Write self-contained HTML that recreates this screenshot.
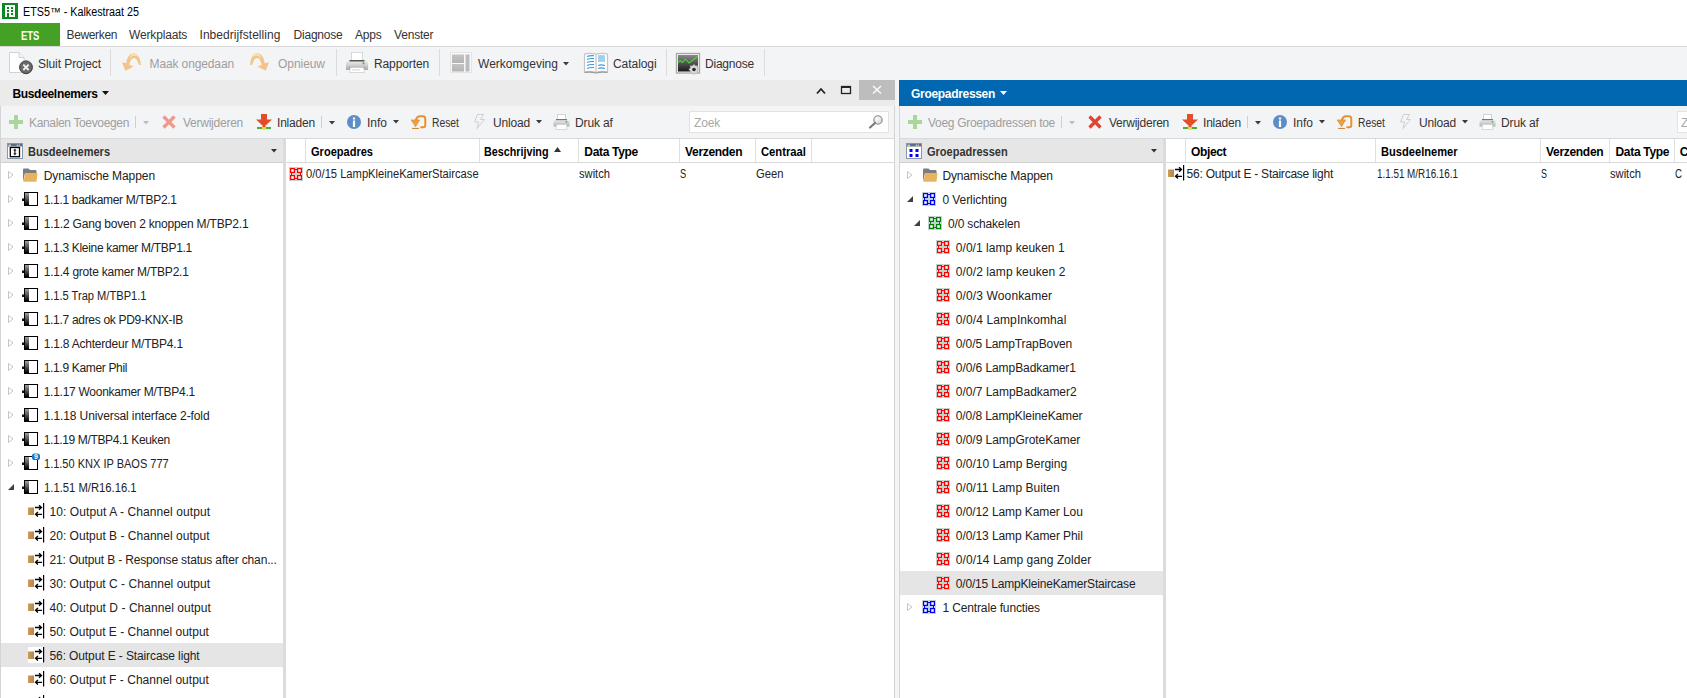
<!DOCTYPE html>
<html><head><meta charset="utf-8"><title>ETS5</title>
<style>
html,body{margin:0;padding:0;width:1687px;height:698px;overflow:hidden;background:#fff}
.t{position:absolute;font-family:"Liberation Sans", sans-serif;font-size:12px;line-height:14px;white-space:pre}
svg{overflow:visible}
</style></head><body>
<div style="position:absolute;left:0px;top:0px;width:1687px;height:698px;background:#ffffff;"></div>
<svg style="position:absolute;left:2px;top:3px" width="16" height="16" viewBox="0 0 16 16"><rect x="0" y="0" width="16" height="16" fill="#0a8a1e"/><rect x="3" y="2" width="10" height="12" fill="#fff"/><rect x="5" y="4" width="2" height="2" fill="#0a8a1e"/><rect x="9" y="4" width="2" height="2" fill="#0a8a1e"/><rect x="5" y="7" width="2" height="2" fill="#0a8a1e"/><rect x="9" y="7" width="2" height="2" fill="#0a8a1e"/><rect x="5" y="10" width="2" height="4" fill="#0a8a1e"/><rect x="9" y="10" width="2" height="2" fill="#0a8a1e"/></svg>
<div style="position:absolute;left:0px;top:23px;width:60px;height:23px;background:#45a026;"></div>
<div style="position:absolute;left:0px;top:46px;width:1687px;height:1px;background:#dadada;"></div>
<div style="position:absolute;left:0px;top:47px;width:1687px;height:33px;background:#f3f4f6;"></div>
<div style="position:absolute;left:110px;top:49px;width:1px;height:27px;background:#dcdcdc;"></div>
<div style="position:absolute;left:336px;top:49px;width:1px;height:27px;background:#dcdcdc;"></div>
<div style="position:absolute;left:439px;top:49px;width:1px;height:27px;background:#dcdcdc;"></div>
<div style="position:absolute;left:666px;top:49px;width:1px;height:27px;background:#dcdcdc;"></div>
<div style="position:absolute;left:764px;top:49px;width:1px;height:27px;background:#dcdcdc;"></div>
<svg style="position:absolute;left:8px;top:51px" width="26" height="24" viewBox="0 0 26 24"><path d="M1.5 1.5 H11 L16 6.5 V21.5 H1.5 Z" fill="#fff" stroke="#d2d2d2" stroke-width="1"/><path d="M11 1.5 V6.5 H16" fill="#f4f4f4" stroke="#d2d2d2" stroke-width="1"/><circle cx="18" cy="16.3" r="6.4" fill="#6a6a6a" stroke="#3a3a3a" stroke-width="1"/><path d="M15.3 13.6 L20.7 19 M20.7 13.6 L15.3 19" stroke="#f0f0f0" stroke-width="2"/></svg>
<svg style="position:absolute;left:121px;top:52px" width="22" height="20" viewBox="0 0 22 20"><path d="M19.9 13.3 C19.5 6 16.5 1.2 12.8 1.2 C8.8 1.2 6 5 5.3 11.3 L1 10.3 L4.3 18.7 L12.7 14.4 L8.4 12.9 C9 8.8 10.8 6 13 6 C15 6 16.8 8.3 17.6 12.5 Z" fill="#f2c48c"/><path d="M12.8 1.4 C15.5 1.4 17.3 3.5 18 5.5 C16.5 4.3 14.8 3.6 13 3.8 C11 4 9.5 5.3 8.3 7.3 C9 4 10.8 1.4 12.8 1.4Z" fill="#f6e6a8"/></svg>
<svg style="position:absolute;left:249px;top:52px" width="22" height="20" viewBox="0 0 22 20"><g transform="translate(21,0) scale(-1,1)"><path d="M19.9 13.3 C19.5 6 16.5 1.2 12.8 1.2 C8.8 1.2 6 5 5.3 11.3 L1 10.3 L4.3 18.7 L12.7 14.4 L8.4 12.9 C9 8.8 10.8 6 13 6 C15 6 16.8 8.3 17.6 12.5 Z" fill="#f2c48c"/><path d="M12.8 1.4 C15.5 1.4 17.3 3.5 18 5.5 C16.5 4.3 14.8 3.6 13 3.8 C11 4 9.5 5.3 8.3 7.3 C9 4 10.8 1.4 12.8 1.4Z" fill="#f6e6a8"/></g></svg>
<svg style="position:absolute;left:345px;top:51px" width="24" height="22" viewBox="0 0 24 22"><defs><linearGradient id="pg" x1="0" y1="0" x2="0" y2="1"><stop offset="0" stop-color="#f0f0f0"/><stop offset="0.5" stop-color="#cfcfcf"/><stop offset="1" stop-color="#a8a8a8"/></linearGradient></defs><rect x="6.5" y="1.5" width="11" height="8" fill="#fff" stroke="#d8d8d8" stroke-width="1"/><path d="M3 9.5 H21 Q23 10 23 12 V19 H1 V12 Q1 10 3 9.5 Z" fill="url(#pg)"/><rect x="4.5" y="9" width="15" height="1.5" fill="#555"/><circle cx="18.5" cy="12.3" r="1.1" fill="#3fbf3f"/><rect x="4.5" y="16" width="15" height="1" fill="#777"/><path d="M5.5 16.5 H18.5 L19.5 21.5 H4.5 Z" fill="#fff" stroke="#d0d0d0" stroke-width="0.8"/><rect x="7" y="18.5" width="8" height="0.8" fill="#c8c8c8"/></svg>
<svg style="position:absolute;left:449px;top:51px" width="24" height="23" viewBox="0 0 24 23"><defs><linearGradient id="wg" x1="0" y1="0" x2="0" y2="1"><stop offset="0" stop-color="#c4c4c4"/><stop offset="1" stop-color="#b4b4b4"/></linearGradient></defs><rect x="1.5" y="1.5" width="21" height="20" fill="#f8f8f8" stroke="#e4e4e4" stroke-width="1"/><rect x="3" y="3.5" width="12" height="8.5" fill="url(#wg)"/><rect x="3" y="13" width="12" height="7.5" fill="url(#wg)"/><rect x="16.5" y="3.5" width="4" height="17" fill="#bcbcbc"/></svg>
<svg style="position:absolute;left:563px;top:62px" width="6" height="3.5" viewBox="0 0 6 3.5"><path d="M0 0 H6 L3.0 3.5 Z" fill="#3c3c3c"/></svg>
<svg style="position:absolute;left:583px;top:52px" width="26" height="23" viewBox="0 0 26 23"><path d="M1.5 2 Q7 0.8 13 2.2 Q19 0.8 24.5 2 V19.8 Q19 18.8 13 20.3 Q7 18.8 1.5 19.8 Z" fill="#fff" stroke="#c4c4c4" stroke-width="1.2"/><path d="M13 2.2 V20" stroke="#d0d0d0" stroke-width="1.6"/><path d="M15 3.3 Q18.5 2.6 22 3.3 V10 Q18.5 9.4 15 10 Z" fill="#9fd0ee"/><path d="M4 4.6000000000000005 Q6 3.5 11 3.7" stroke="#3c9ad8" stroke-width="1.1" fill="none"/><path d="M4 7.5 Q6 6.3999999999999995 11 6.6" stroke="#3c9ad8" stroke-width="1.1" fill="none"/><path d="M4 10.5 Q6 9.4 11 9.6" stroke="#3c9ad8" stroke-width="1.1" fill="none"/><path d="M4 13.5 Q6 12.4 11 12.6" stroke="#3c9ad8" stroke-width="1.1" fill="none"/><path d="M4 16.5 Q6 15.4 11 15.6" stroke="#3c9ad8" stroke-width="1.1" fill="none"/><path d="M15.2 13.5 Q17.5 12.299999999999999 22 13.5" stroke="#3c9ad8" stroke-width="1.1" fill="none"/><path d="M15.2 16.5 Q17.5 15.299999999999999 22 16.5" stroke="#3c9ad8" stroke-width="1.1" fill="none"/><path d="M1.5 20.5 Q7 19.5 13 21 Q19 19.5 24.5 20.5" stroke="#9a9a9a" stroke-width="1.1" fill="none"/></svg>
<svg style="position:absolute;left:675px;top:52px" width="26" height="24" viewBox="0 0 26 24"><defs><linearGradient id="dg" x1="0" y1="0" x2="0" y2="1"><stop offset="0" stop-color="#8a8a8a"/><stop offset="1" stop-color="#1a1a1a"/></linearGradient></defs><rect x="1.5" y="1.5" width="23" height="19.5" fill="#f4f4f4" stroke="#a8a8a8" stroke-width="1.3"/><rect x="3" y="3" width="20" height="16.5" fill="url(#dg)"/><path d="M3 11 L5 8.5 L7.5 10.5 L10.5 7 L14 11 L22.5 4.5" stroke="#4fd23a" stroke-width="1.1" fill="none"/><polygon points="24.20,17.50 22.51,18.95 22.68,21.18 20.45,21.01 19.00,22.70 17.55,21.01 15.32,21.18 15.49,18.95 13.80,17.50 15.49,16.05 15.32,13.82 17.55,13.99 19.00,12.30 20.45,13.99 22.68,13.82 22.51,16.05" fill="#d8d8d8" stroke="#b0b0b0" stroke-width="0.6"/><circle cx="19" cy="17.5" r="1.8" fill="#2a2a2a"/></svg>
<div style="position:absolute;left:0px;top:80px;width:895px;height:26px;background:#ebebeb;"></div>
<div style="position:absolute;left:859px;top:80px;width:36px;height:20px;background:#bdbdbd;"></div>
<svg style="position:absolute;left:872px;top:85px" width="10" height="10" viewBox="0 0 10 10"><path d="M1 1 L9 8.5 M9 1 L1 8.5" stroke="#fff" stroke-width="1.3"/></svg>
<svg style="position:absolute;left:840px;top:85px" width="12" height="10" viewBox="0 0 12 10"><rect x="1.5" y="1.5" width="9" height="7" fill="none" stroke="#222" stroke-width="1.3"/><rect x="1" y="1" width="10" height="2" fill="#222"/></svg>
<svg style="position:absolute;left:816px;top:87px" width="10" height="8" viewBox="0 0 10 8"><path d="M1 6.5 L5 2 L9 6.5" fill="none" stroke="#222" stroke-width="1.8"/></svg>
<div style="position:absolute;left:895px;top:80px;width:4px;height:618px;background:#f3f4f6;"></div>
<svg style="position:absolute;left:102px;top:91px" width="7" height="4" viewBox="0 0 7 4"><path d="M0 0 H7 L3.5 4 Z" fill="#111"/></svg>
<div style="position:absolute;left:899px;top:80px;width:788px;height:26px;background:#0067b0;"></div>
<svg style="position:absolute;left:1000px;top:91px" width="7" height="4" viewBox="0 0 7 4"><path d="M0 0 H7 L3.5 4 Z" fill="#fff"/></svg>
<div style="position:absolute;left:0px;top:106px;width:895px;height:32px;background:#f3f4f6;"></div>
<div style="position:absolute;left:0px;top:138px;width:895px;height:1px;background:#d9d9d9;"></div>
<div style="position:absolute;left:899px;top:106px;width:788px;height:32px;background:#f3f4f6;"></div>
<div style="position:absolute;left:899px;top:138px;width:788px;height:1px;background:#d9d9d9;"></div>
<div style="position:absolute;left:0px;top:106px;width:1px;height:592px;background:#d4d4d4;"></div>
<div style="position:absolute;left:894px;top:106px;width:1px;height:592px;background:#d4d4d4;"></div>
<div style="position:absolute;left:899px;top:106px;width:1px;height:592px;background:#d4d4d4;"></div>
<svg style="position:absolute;left:9px;top:115px" width="16" height="16" viewBox="0 0 16 16"><rect x="5" y="0" width="4" height="14" fill="#a9d69b"/><rect x="0" y="5" width="14" height="4" fill="#a9d69b"/></svg>
<div style="position:absolute;left:135px;top:116px;width:1px;height:12px;background:#cfcfcf;"></div>
<svg style="position:absolute;left:143.0px;top:120.5px" width="6" height="3.5" viewBox="0 0 6 3.5"><path d="M0 0 H6 L3.0 3.5 Z" fill="#bdbdbd"/></svg>
<svg style="position:absolute;left:162.0px;top:114.5px" width="15" height="15" viewBox="0 0 15 15"><path d="M1.5 1.5 L12.5 12.5 M12.5 1.5 L1.5 12.5" stroke="#f0998a" stroke-width="3.2" stroke-linecap="butt"/></svg>
<svg style="position:absolute;left:255.0px;top:113px" width="18" height="18" viewBox="0 0 18 18"><path d="M6 1 H12 V6.5 H17 L9 14 L1 6.5 H6 Z" fill="#e44d2c"/><rect x="2" y="14" width="14" height="2" fill="#4cad3a"/><rect x="7" y="13" width="4" height="3.8" fill="#e8dc4a"/><path d="M7 13 L9 14.5 L11 13" fill="#e44d2c"/></svg>
<div style="position:absolute;left:321px;top:116px;width:1px;height:12px;background:#cfcfcf;"></div>
<svg style="position:absolute;left:328.5px;top:120.5px" width="6" height="3.5" viewBox="0 0 6 3.5"><path d="M0 0 H6 L3.0 3.5 Z" fill="#3c3c3c"/></svg>
<svg style="position:absolute;left:346.8px;top:115px" width="15" height="15" viewBox="0 0 15 15"><circle cx="7" cy="7" r="7" fill="#5b8ec6"/><rect x="5.9" y="2.5" width="2.2" height="2" fill="#fff"/><rect x="5.9" y="5.5" width="2.2" height="6.5" fill="#fff"/></svg>
<svg style="position:absolute;left:393.0px;top:120px" width="6" height="3.5" viewBox="0 0 6 3.5"><path d="M0 0 H6 L3.0 3.5 Z" fill="#3c3c3c"/></svg>
<svg style="position:absolute;left:410.0px;top:113px" width="18" height="17" viewBox="0 0 18 17"><path d="M5.8 8 Q6.5 3.3 10 3.3 H12.8 Q15.3 3.3 15.3 6 V12.3 Q15.3 14.3 13.3 14.3 H10.3" stroke="#e8922e" stroke-width="2" fill="none"/><path d="M1.2 6.9 L9.7 6.9 L5.5 13.8 Z" fill="#f0a040" stroke="#d8862a" stroke-width="0.6"/><rect x="2" y="14.9" width="7" height="1.1" fill="#c98a4a"/></svg>
<svg style="position:absolute;left:473.0px;top:113px" width="13" height="17" viewBox="0 0 13 17"><path d="M4.5 1.5 H10.5 L7.5 6.5 H11.5 L4 15.5 L5.5 9 H1.5 Z" fill="none" stroke="#cfcfcf" stroke-width="1"/></svg>
<svg style="position:absolute;left:536.0px;top:120px" width="6" height="3.5" viewBox="0 0 6 3.5"><path d="M0 0 H6 L3.0 3.5 Z" fill="#3c3c3c"/></svg>
<svg style="position:absolute;left:553.0px;top:113px" width="18" height="18" viewBox="0 0 18 18"><defs><linearGradient id="pg2" x1="0" y1="0" x2="0" y2="1"><stop offset="0" stop-color="#eeeeee"/><stop offset="1" stop-color="#b0b0b0"/></linearGradient></defs><rect x="4.5" y="1.5" width="8" height="5" fill="#fff" stroke="#d4d4d4" stroke-width="1"/><path d="M2.5 6.5 H14.5 Q16.5 7 16.5 9 V13.5 H0.5 V9 Q0.5 7 2.5 6.5 Z" fill="url(#pg2)"/><rect x="3" y="6" width="11" height="1.2" fill="#777"/><circle cx="13.5" cy="8.8" r="0.9" fill="#3fbf3f"/><path d="M3.5 11.5 H13.5 L14 16.5 H3 Z" fill="#fff" stroke="#cfcfcf" stroke-width="0.8"/></svg>
<svg style="position:absolute;left:908px;top:115px" width="16" height="16" viewBox="0 0 16 16"><rect x="5" y="0" width="4" height="14" fill="#a9d69b"/><rect x="0" y="5" width="14" height="4" fill="#a9d69b"/></svg>
<div style="position:absolute;left:1061px;top:116px;width:1px;height:12px;background:#cfcfcf;"></div>
<svg style="position:absolute;left:1069.0px;top:120.5px" width="6" height="3.5" viewBox="0 0 6 3.5"><path d="M0 0 H6 L3.0 3.5 Z" fill="#bdbdbd"/></svg>
<svg style="position:absolute;left:1088.0px;top:114.5px" width="15" height="15" viewBox="0 0 15 15"><path d="M1.5 1.5 L12.5 12.5 M12.5 1.5 L1.5 12.5" stroke="#e0442c" stroke-width="3.2" stroke-linecap="butt"/></svg>
<svg style="position:absolute;left:1181.0px;top:113px" width="18" height="18" viewBox="0 0 18 18"><path d="M6 1 H12 V6.5 H17 L9 14 L1 6.5 H6 Z" fill="#e44d2c"/><rect x="2" y="14" width="14" height="2" fill="#4cad3a"/><rect x="7" y="13" width="4" height="3.8" fill="#e8dc4a"/><path d="M7 13 L9 14.5 L11 13" fill="#e44d2c"/></svg>
<div style="position:absolute;left:1247px;top:116px;width:1px;height:12px;background:#cfcfcf;"></div>
<svg style="position:absolute;left:1254.5px;top:120.5px" width="6" height="3.5" viewBox="0 0 6 3.5"><path d="M0 0 H6 L3.0 3.5 Z" fill="#3c3c3c"/></svg>
<svg style="position:absolute;left:1272.8px;top:115px" width="15" height="15" viewBox="0 0 15 15"><circle cx="7" cy="7" r="7" fill="#5b8ec6"/><rect x="5.9" y="2.5" width="2.2" height="2" fill="#fff"/><rect x="5.9" y="5.5" width="2.2" height="6.5" fill="#fff"/></svg>
<svg style="position:absolute;left:1319.0px;top:120px" width="6" height="3.5" viewBox="0 0 6 3.5"><path d="M0 0 H6 L3.0 3.5 Z" fill="#3c3c3c"/></svg>
<svg style="position:absolute;left:1336.0px;top:113px" width="18" height="17" viewBox="0 0 18 17"><path d="M5.8 8 Q6.5 3.3 10 3.3 H12.8 Q15.3 3.3 15.3 6 V12.3 Q15.3 14.3 13.3 14.3 H10.3" stroke="#e8922e" stroke-width="2" fill="none"/><path d="M1.2 6.9 L9.7 6.9 L5.5 13.8 Z" fill="#f0a040" stroke="#d8862a" stroke-width="0.6"/><rect x="2" y="14.9" width="7" height="1.1" fill="#c98a4a"/></svg>
<svg style="position:absolute;left:1399.0px;top:113px" width="13" height="17" viewBox="0 0 13 17"><path d="M4.5 1.5 H10.5 L7.5 6.5 H11.5 L4 15.5 L5.5 9 H1.5 Z" fill="none" stroke="#cfcfcf" stroke-width="1"/></svg>
<svg style="position:absolute;left:1462.0px;top:120px" width="6" height="3.5" viewBox="0 0 6 3.5"><path d="M0 0 H6 L3.0 3.5 Z" fill="#3c3c3c"/></svg>
<svg style="position:absolute;left:1479.0px;top:113px" width="18" height="18" viewBox="0 0 18 18"><defs><linearGradient id="pg2" x1="0" y1="0" x2="0" y2="1"><stop offset="0" stop-color="#eeeeee"/><stop offset="1" stop-color="#b0b0b0"/></linearGradient></defs><rect x="4.5" y="1.5" width="8" height="5" fill="#fff" stroke="#d4d4d4" stroke-width="1"/><path d="M2.5 6.5 H14.5 Q16.5 7 16.5 9 V13.5 H0.5 V9 Q0.5 7 2.5 6.5 Z" fill="url(#pg2)"/><rect x="3" y="6" width="11" height="1.2" fill="#777"/><circle cx="13.5" cy="8.8" r="0.9" fill="#3fbf3f"/><path d="M3.5 11.5 H13.5 L14 16.5 H3 Z" fill="#fff" stroke="#cfcfcf" stroke-width="0.8"/></svg>
<div style="position:absolute;left:689px;top:111px;width:200px;height:22px;background:#ffffff;box-sizing:border-box;border:1px solid #e3e3e3;"></div>
<svg style="position:absolute;left:868px;top:114px" width="16" height="15" viewBox="0 0 16 15"><defs><radialGradient id="mg" cx="0.4" cy="0.35" r="0.7"><stop offset="0" stop-color="#ffffff"/><stop offset="1" stop-color="#cfcfcf"/></radialGradient></defs><circle cx="10" cy="6" r="4.2" fill="url(#mg)" stroke="#8a8a8a" stroke-width="1.1"/><path d="M7 9 L2 13.5" stroke="#7a7a7a" stroke-width="2.2" stroke-linecap="round"/></svg>
<div style="position:absolute;left:1677px;top:111px;width:20px;height:22px;background:#ffffff;box-sizing:border-box;border:1px solid #e3e3e3;"></div>
<div style="position:absolute;left:1px;top:139px;width:282px;height:23px;background:#e6e6e6;"></div>
<div style="position:absolute;left:283px;top:139px;width:3px;height:559px;background:#dcdcdc;"></div>
<div style="position:absolute;left:1px;top:162px;width:282px;height:1px;background:#d0d0d0;"></div>
<div style="position:absolute;left:286px;top:162px;width:608px;height:1px;background:#dadada;"></div>
<svg style="position:absolute;left:7px;top:143px" width="16" height="16" viewBox="0 0 16 16"><rect x="0.5" y="0.5" width="15" height="15" fill="#fff" stroke="#8796a8" stroke-width="1"/><rect x="1" y="1" width="14" height="2.5" fill="#5e6e80"/><rect x="1.5" y="1.7" width="2.5" height="1" fill="#fff"/><circle cx="10.3" cy="2.2" r="0.6" fill="#fff"/><circle cx="12.3" cy="2.2" r="0.6" fill="#fff"/><circle cx="14.2" cy="2.2" r="0.7" fill="#e03020"/><rect x="3.3" y="4.5" width="9.2" height="9.2" fill="#fff" stroke="#000" stroke-width="1.3"/><path d="M7.9 7 V11" stroke="#222" stroke-width="1.2"/><path d="M6.2 7.8 L7.9 5.6 L9.6 7.8 Z M6.2 10.2 L7.9 12.4 L9.6 10.2 Z" fill="#222"/></svg>
<svg style="position:absolute;left:271px;top:149px" width="6" height="3.5" viewBox="0 0 6 3.5"><path d="M0 0 H6 L3.0 3.5 Z" fill="#333"/></svg>
<div style="position:absolute;left:900px;top:139px;width:263px;height:23px;background:#e6e6e6;"></div>
<div style="position:absolute;left:1163px;top:139px;width:3px;height:559px;background:#dcdcdc;"></div>
<div style="position:absolute;left:900px;top:162px;width:263px;height:1px;background:#d0d0d0;"></div>
<div style="position:absolute;left:1166px;top:162px;width:521px;height:1px;background:#dadada;"></div>
<svg style="position:absolute;left:906px;top:143px" width="16" height="16" viewBox="0 0 16 16"><rect x="0.5" y="0.5" width="15" height="15" fill="#fff" stroke="#8796a8" stroke-width="1"/><rect x="1" y="1" width="14" height="2.5" fill="#5e6e80"/><rect x="1.5" y="1.7" width="2.5" height="1" fill="#fff"/><circle cx="10.3" cy="2.2" r="0.6" fill="#fff"/><circle cx="12.3" cy="2.2" r="0.6" fill="#fff"/><circle cx="14.2" cy="2.2" r="0.7" fill="#e03020"/><rect x="3.5" y="6" width="3" height="3" fill="#0000ee"/><rect x="9.5" y="6" width="3" height="3" fill="#0000ee"/><rect x="3.5" y="11" width="3" height="3" fill="#0000ee"/><rect x="9.5" y="11" width="3" height="3" fill="#0000ee"/></svg>
<svg style="position:absolute;left:1151px;top:149px" width="6" height="3.5" viewBox="0 0 6 3.5"><path d="M0 0 H6 L3.0 3.5 Z" fill="#333"/></svg>
<div style="position:absolute;left:305px;top:139px;width:1px;height:23px;background:#e0e0e0;"></div>
<div style="position:absolute;left:479px;top:139px;width:1px;height:23px;background:#e0e0e0;"></div>
<div style="position:absolute;left:578px;top:139px;width:1px;height:23px;background:#e0e0e0;"></div>
<div style="position:absolute;left:679px;top:139px;width:1px;height:23px;background:#e0e0e0;"></div>
<div style="position:absolute;left:755px;top:139px;width:1px;height:23px;background:#e0e0e0;"></div>
<div style="position:absolute;left:811px;top:139px;width:1px;height:23px;background:#e0e0e0;"></div>
<svg style="position:absolute;left:554px;top:147px" width="7" height="5" viewBox="0 0 7 5"><path d="M0 5 H7 L3.5 0 Z" fill="#333"/></svg>
<div style="position:absolute;left:1185px;top:139px;width:1px;height:23px;background:#e0e0e0;"></div>
<div style="position:absolute;left:1375px;top:139px;width:1px;height:23px;background:#e0e0e0;"></div>
<div style="position:absolute;left:1540px;top:139px;width:1px;height:23px;background:#e0e0e0;"></div>
<div style="position:absolute;left:1609px;top:139px;width:1px;height:23px;background:#e0e0e0;"></div>
<div style="position:absolute;left:1674px;top:139px;width:1px;height:23px;background:#e0e0e0;"></div>
<svg style="position:absolute;left:289px;top:167px" width="14" height="14" viewBox="0 0 14 14"><rect x="0" y="0" width="14" height="14" fill="#c4cccc"/><rect x="0.7" y="0.7" width="12.6" height="12.6" fill="#cde4e4"/><rect x="6" y="4" width="2" height="6" fill="#c2d4d4"/><rect x="4" y="6" width="6" height="2" fill="#c2d4d4"/><rect x="6" y="2" width="2" height="1.1" fill="#ff0000"/><rect x="6" y="10.9" width="2" height="1.1" fill="#ff0000"/><rect x="2" y="6" width="1.1" height="2" fill="#ff0000"/><rect x="10.9" y="6" width="1.1" height="2" fill="#ff0000"/><rect x="1.6" y="1.6" width="3.8" height="3.8" fill="#fff" stroke="#ff0000" stroke-width="1.25"/><rect x="1.6" y="8.6" width="3.8" height="3.8" fill="#fff" stroke="#ff0000" stroke-width="1.25"/><rect x="8.6" y="1.6" width="3.8" height="3.8" fill="#fff" stroke="#ff0000" stroke-width="1.25"/><rect x="8.6" y="8.6" width="3.8" height="3.8" fill="#fff" stroke="#ff0000" stroke-width="1.25"/></svg>
<svg style="position:absolute;left:1168px;top:164px" width="17" height="17" viewBox="0 0 17 17"><defs><linearGradient id="chg" x1="0" y1="0" x2="1" y2="0"><stop offset="0" stop-color="#d09a5c"/><stop offset="1" stop-color="#b88448"/></linearGradient></defs><rect x="0" y="5.5" width="6" height="7.5" fill="url(#chg)"/><path d="M7 5.5 H13.2 M11 3.3 L13.5 5.5 L11 7.7" stroke="#000" stroke-width="1.3" fill="none"/><path d="M14 12.3 H7.8 M10 10.1 L7.5 12.3 L10 14.5" stroke="#000" stroke-width="1.3" fill="none"/><rect x="15" y="1" width="1.2" height="15.5" fill="#000"/></svg>
<svg style="position:absolute;left:8px;top:171px" width="6" height="9" viewBox="0 0 6 9"><path d="M0.5 0.5 L5 4 L0.5 7.5 Z" fill="none" stroke="#c6c6c6" stroke-width="1"/></svg>
<svg style="position:absolute;left:22px;top:168px" width="16" height="15" viewBox="0 0 16 15"><path d="M1 14 V1.5 Q1 0.5 2 0.5 H6.5 L8 2 H13.5 Q14.5 2 14.5 3 V5 H3 Z" fill="#7d7d7d"/><path d="M3.2 5 H15.5 L14.5 13.7 H1.5 Z" fill="#e8b35c"/></svg>
<svg style="position:absolute;left:8px;top:195px" width="6" height="9" viewBox="0 0 6 9"><path d="M0.5 0.5 L5 4 L0.5 7.5 Z" fill="none" stroke="#c6c6c6" stroke-width="1"/></svg>
<svg style="position:absolute;left:22px;top:192px" width="18" height="15" viewBox="0 0 18 15"><defs><linearGradient id="gd" x1="0" y1="0" x2="0" y2="1"><stop offset="0" stop-color="#a0a0a0"/><stop offset="1" stop-color="#000"/></linearGradient></defs><rect x="0" y="6.5" width="2.5" height="2.5" fill="#111"/><rect x="2.5" y="0.5" width="13" height="13" fill="#fff" stroke="#000" stroke-width="1"/><rect x="3" y="1" width="4" height="12" fill="url(#gd)"/></svg>
<svg style="position:absolute;left:8px;top:219px" width="6" height="9" viewBox="0 0 6 9"><path d="M0.5 0.5 L5 4 L0.5 7.5 Z" fill="none" stroke="#c6c6c6" stroke-width="1"/></svg>
<svg style="position:absolute;left:22px;top:216px" width="18" height="15" viewBox="0 0 18 15"><defs><linearGradient id="gd" x1="0" y1="0" x2="0" y2="1"><stop offset="0" stop-color="#a0a0a0"/><stop offset="1" stop-color="#000"/></linearGradient></defs><rect x="0" y="6.5" width="2.5" height="2.5" fill="#111"/><rect x="2.5" y="0.5" width="13" height="13" fill="#fff" stroke="#000" stroke-width="1"/><rect x="3" y="1" width="4" height="12" fill="url(#gd)"/></svg>
<svg style="position:absolute;left:8px;top:243px" width="6" height="9" viewBox="0 0 6 9"><path d="M0.5 0.5 L5 4 L0.5 7.5 Z" fill="none" stroke="#c6c6c6" stroke-width="1"/></svg>
<svg style="position:absolute;left:22px;top:240px" width="18" height="15" viewBox="0 0 18 15"><defs><linearGradient id="gd" x1="0" y1="0" x2="0" y2="1"><stop offset="0" stop-color="#a0a0a0"/><stop offset="1" stop-color="#000"/></linearGradient></defs><rect x="0" y="6.5" width="2.5" height="2.5" fill="#111"/><rect x="2.5" y="0.5" width="13" height="13" fill="#fff" stroke="#000" stroke-width="1"/><rect x="3" y="1" width="4" height="12" fill="url(#gd)"/></svg>
<svg style="position:absolute;left:8px;top:267px" width="6" height="9" viewBox="0 0 6 9"><path d="M0.5 0.5 L5 4 L0.5 7.5 Z" fill="none" stroke="#c6c6c6" stroke-width="1"/></svg>
<svg style="position:absolute;left:22px;top:264px" width="18" height="15" viewBox="0 0 18 15"><defs><linearGradient id="gd" x1="0" y1="0" x2="0" y2="1"><stop offset="0" stop-color="#a0a0a0"/><stop offset="1" stop-color="#000"/></linearGradient></defs><rect x="0" y="6.5" width="2.5" height="2.5" fill="#111"/><rect x="2.5" y="0.5" width="13" height="13" fill="#fff" stroke="#000" stroke-width="1"/><rect x="3" y="1" width="4" height="12" fill="url(#gd)"/></svg>
<svg style="position:absolute;left:8px;top:291px" width="6" height="9" viewBox="0 0 6 9"><path d="M0.5 0.5 L5 4 L0.5 7.5 Z" fill="none" stroke="#c6c6c6" stroke-width="1"/></svg>
<svg style="position:absolute;left:22px;top:288px" width="18" height="15" viewBox="0 0 18 15"><defs><linearGradient id="gd" x1="0" y1="0" x2="0" y2="1"><stop offset="0" stop-color="#a0a0a0"/><stop offset="1" stop-color="#000"/></linearGradient></defs><rect x="0" y="6.5" width="2.5" height="2.5" fill="#111"/><rect x="2.5" y="0.5" width="13" height="13" fill="#fff" stroke="#000" stroke-width="1"/><rect x="3" y="1" width="4" height="12" fill="url(#gd)"/></svg>
<svg style="position:absolute;left:8px;top:315px" width="6" height="9" viewBox="0 0 6 9"><path d="M0.5 0.5 L5 4 L0.5 7.5 Z" fill="none" stroke="#c6c6c6" stroke-width="1"/></svg>
<svg style="position:absolute;left:22px;top:312px" width="18" height="15" viewBox="0 0 18 15"><defs><linearGradient id="gd" x1="0" y1="0" x2="0" y2="1"><stop offset="0" stop-color="#a0a0a0"/><stop offset="1" stop-color="#000"/></linearGradient></defs><rect x="0" y="6.5" width="2.5" height="2.5" fill="#111"/><rect x="2.5" y="0.5" width="13" height="13" fill="#fff" stroke="#000" stroke-width="1"/><rect x="3" y="1" width="4" height="12" fill="url(#gd)"/></svg>
<svg style="position:absolute;left:8px;top:339px" width="6" height="9" viewBox="0 0 6 9"><path d="M0.5 0.5 L5 4 L0.5 7.5 Z" fill="none" stroke="#c6c6c6" stroke-width="1"/></svg>
<svg style="position:absolute;left:22px;top:336px" width="18" height="15" viewBox="0 0 18 15"><defs><linearGradient id="gd" x1="0" y1="0" x2="0" y2="1"><stop offset="0" stop-color="#a0a0a0"/><stop offset="1" stop-color="#000"/></linearGradient></defs><rect x="0" y="6.5" width="2.5" height="2.5" fill="#111"/><rect x="2.5" y="0.5" width="13" height="13" fill="#fff" stroke="#000" stroke-width="1"/><rect x="3" y="1" width="4" height="12" fill="url(#gd)"/></svg>
<svg style="position:absolute;left:8px;top:363px" width="6" height="9" viewBox="0 0 6 9"><path d="M0.5 0.5 L5 4 L0.5 7.5 Z" fill="none" stroke="#c6c6c6" stroke-width="1"/></svg>
<svg style="position:absolute;left:22px;top:360px" width="18" height="15" viewBox="0 0 18 15"><defs><linearGradient id="gd" x1="0" y1="0" x2="0" y2="1"><stop offset="0" stop-color="#a0a0a0"/><stop offset="1" stop-color="#000"/></linearGradient></defs><rect x="0" y="6.5" width="2.5" height="2.5" fill="#111"/><rect x="2.5" y="0.5" width="13" height="13" fill="#fff" stroke="#000" stroke-width="1"/><rect x="3" y="1" width="4" height="12" fill="url(#gd)"/></svg>
<svg style="position:absolute;left:8px;top:387px" width="6" height="9" viewBox="0 0 6 9"><path d="M0.5 0.5 L5 4 L0.5 7.5 Z" fill="none" stroke="#c6c6c6" stroke-width="1"/></svg>
<svg style="position:absolute;left:22px;top:384px" width="18" height="15" viewBox="0 0 18 15"><defs><linearGradient id="gd" x1="0" y1="0" x2="0" y2="1"><stop offset="0" stop-color="#a0a0a0"/><stop offset="1" stop-color="#000"/></linearGradient></defs><rect x="0" y="6.5" width="2.5" height="2.5" fill="#111"/><rect x="2.5" y="0.5" width="13" height="13" fill="#fff" stroke="#000" stroke-width="1"/><rect x="3" y="1" width="4" height="12" fill="url(#gd)"/></svg>
<svg style="position:absolute;left:8px;top:411px" width="6" height="9" viewBox="0 0 6 9"><path d="M0.5 0.5 L5 4 L0.5 7.5 Z" fill="none" stroke="#c6c6c6" stroke-width="1"/></svg>
<svg style="position:absolute;left:22px;top:408px" width="18" height="15" viewBox="0 0 18 15"><defs><linearGradient id="gd" x1="0" y1="0" x2="0" y2="1"><stop offset="0" stop-color="#a0a0a0"/><stop offset="1" stop-color="#000"/></linearGradient></defs><rect x="0" y="6.5" width="2.5" height="2.5" fill="#111"/><rect x="2.5" y="0.5" width="13" height="13" fill="#fff" stroke="#000" stroke-width="1"/><rect x="3" y="1" width="4" height="12" fill="url(#gd)"/></svg>
<svg style="position:absolute;left:8px;top:435px" width="6" height="9" viewBox="0 0 6 9"><path d="M0.5 0.5 L5 4 L0.5 7.5 Z" fill="none" stroke="#c6c6c6" stroke-width="1"/></svg>
<svg style="position:absolute;left:22px;top:432px" width="18" height="15" viewBox="0 0 18 15"><defs><linearGradient id="gd" x1="0" y1="0" x2="0" y2="1"><stop offset="0" stop-color="#a0a0a0"/><stop offset="1" stop-color="#000"/></linearGradient></defs><rect x="0" y="6.5" width="2.5" height="2.5" fill="#111"/><rect x="2.5" y="0.5" width="13" height="13" fill="#fff" stroke="#000" stroke-width="1"/><rect x="3" y="1" width="4" height="12" fill="url(#gd)"/></svg>
<svg style="position:absolute;left:8px;top:459px" width="6" height="9" viewBox="0 0 6 9"><path d="M0.5 0.5 L5 4 L0.5 7.5 Z" fill="none" stroke="#c6c6c6" stroke-width="1"/></svg>
<svg style="position:absolute;left:22px;top:456px" width="18" height="15" viewBox="0 0 18 15"><defs><linearGradient id="gd" x1="0" y1="0" x2="0" y2="1"><stop offset="0" stop-color="#a0a0a0"/><stop offset="1" stop-color="#000"/></linearGradient></defs><rect x="0" y="6.5" width="2.5" height="2.5" fill="#111"/><rect x="2.5" y="0.5" width="13" height="13" fill="#fff" stroke="#000" stroke-width="1"/><rect x="3" y="1" width="4" height="12" fill="url(#gd)"/><rect x="10" y="-2.6" width="8" height="6.6" rx="2.6" fill="#1a74c8"/><text x="14" y="3.4" font-size="7" font-weight="bold" fill="#fff" text-anchor="middle" font-family="Liberation Sans">9</text></svg>
<svg style="position:absolute;left:8px;top:484px" width="7" height="7" viewBox="0 0 7 7"><path d="M6 0 V6 H0 Z" fill="#404040"/></svg>
<svg style="position:absolute;left:22px;top:480px" width="18" height="15" viewBox="0 0 18 15"><defs><linearGradient id="gd" x1="0" y1="0" x2="0" y2="1"><stop offset="0" stop-color="#a0a0a0"/><stop offset="1" stop-color="#000"/></linearGradient></defs><rect x="0" y="6.5" width="2.5" height="2.5" fill="#111"/><rect x="2.5" y="0.5" width="13" height="13" fill="#fff" stroke="#000" stroke-width="1"/><rect x="3" y="1" width="4" height="12" fill="url(#gd)"/></svg>
<svg style="position:absolute;left:28px;top:502px" width="17" height="17" viewBox="0 0 17 17"><defs><linearGradient id="chg" x1="0" y1="0" x2="1" y2="0"><stop offset="0" stop-color="#d09a5c"/><stop offset="1" stop-color="#b88448"/></linearGradient></defs><rect x="0" y="5.5" width="6" height="7.5" fill="url(#chg)"/><path d="M7 5.5 H13.2 M11 3.3 L13.5 5.5 L11 7.7" stroke="#000" stroke-width="1.3" fill="none"/><path d="M14 12.3 H7.8 M10 10.1 L7.5 12.3 L10 14.5" stroke="#000" stroke-width="1.3" fill="none"/><rect x="15" y="1" width="1.2" height="15.5" fill="#000"/></svg>
<svg style="position:absolute;left:28px;top:526px" width="17" height="17" viewBox="0 0 17 17"><defs><linearGradient id="chg" x1="0" y1="0" x2="1" y2="0"><stop offset="0" stop-color="#d09a5c"/><stop offset="1" stop-color="#b88448"/></linearGradient></defs><rect x="0" y="5.5" width="6" height="7.5" fill="url(#chg)"/><path d="M7 5.5 H13.2 M11 3.3 L13.5 5.5 L11 7.7" stroke="#000" stroke-width="1.3" fill="none"/><path d="M14 12.3 H7.8 M10 10.1 L7.5 12.3 L10 14.5" stroke="#000" stroke-width="1.3" fill="none"/><rect x="15" y="1" width="1.2" height="15.5" fill="#000"/></svg>
<svg style="position:absolute;left:28px;top:550px" width="17" height="17" viewBox="0 0 17 17"><defs><linearGradient id="chg" x1="0" y1="0" x2="1" y2="0"><stop offset="0" stop-color="#d09a5c"/><stop offset="1" stop-color="#b88448"/></linearGradient></defs><rect x="0" y="5.5" width="6" height="7.5" fill="url(#chg)"/><path d="M7 5.5 H13.2 M11 3.3 L13.5 5.5 L11 7.7" stroke="#000" stroke-width="1.3" fill="none"/><path d="M14 12.3 H7.8 M10 10.1 L7.5 12.3 L10 14.5" stroke="#000" stroke-width="1.3" fill="none"/><rect x="15" y="1" width="1.2" height="15.5" fill="#000"/></svg>
<svg style="position:absolute;left:28px;top:574px" width="17" height="17" viewBox="0 0 17 17"><defs><linearGradient id="chg" x1="0" y1="0" x2="1" y2="0"><stop offset="0" stop-color="#d09a5c"/><stop offset="1" stop-color="#b88448"/></linearGradient></defs><rect x="0" y="5.5" width="6" height="7.5" fill="url(#chg)"/><path d="M7 5.5 H13.2 M11 3.3 L13.5 5.5 L11 7.7" stroke="#000" stroke-width="1.3" fill="none"/><path d="M14 12.3 H7.8 M10 10.1 L7.5 12.3 L10 14.5" stroke="#000" stroke-width="1.3" fill="none"/><rect x="15" y="1" width="1.2" height="15.5" fill="#000"/></svg>
<svg style="position:absolute;left:28px;top:598px" width="17" height="17" viewBox="0 0 17 17"><defs><linearGradient id="chg" x1="0" y1="0" x2="1" y2="0"><stop offset="0" stop-color="#d09a5c"/><stop offset="1" stop-color="#b88448"/></linearGradient></defs><rect x="0" y="5.5" width="6" height="7.5" fill="url(#chg)"/><path d="M7 5.5 H13.2 M11 3.3 L13.5 5.5 L11 7.7" stroke="#000" stroke-width="1.3" fill="none"/><path d="M14 12.3 H7.8 M10 10.1 L7.5 12.3 L10 14.5" stroke="#000" stroke-width="1.3" fill="none"/><rect x="15" y="1" width="1.2" height="15.5" fill="#000"/></svg>
<svg style="position:absolute;left:28px;top:622px" width="17" height="17" viewBox="0 0 17 17"><defs><linearGradient id="chg" x1="0" y1="0" x2="1" y2="0"><stop offset="0" stop-color="#d09a5c"/><stop offset="1" stop-color="#b88448"/></linearGradient></defs><rect x="0" y="5.5" width="6" height="7.5" fill="url(#chg)"/><path d="M7 5.5 H13.2 M11 3.3 L13.5 5.5 L11 7.7" stroke="#000" stroke-width="1.3" fill="none"/><path d="M14 12.3 H7.8 M10 10.1 L7.5 12.3 L10 14.5" stroke="#000" stroke-width="1.3" fill="none"/><rect x="15" y="1" width="1.2" height="15.5" fill="#000"/></svg>
<div style="position:absolute;left:1px;top:643px;width:282px;height:24px;background:#e5e5e5;"></div>
<div style="position:absolute;left:28px;top:647px;width:16px;height:16px;background:#ffffff;"></div>
<svg style="position:absolute;left:28px;top:646px" width="17" height="17" viewBox="0 0 17 17"><defs><linearGradient id="chg" x1="0" y1="0" x2="1" y2="0"><stop offset="0" stop-color="#d09a5c"/><stop offset="1" stop-color="#b88448"/></linearGradient></defs><rect x="0" y="5.5" width="6" height="7.5" fill="url(#chg)"/><path d="M7 5.5 H13.2 M11 3.3 L13.5 5.5 L11 7.7" stroke="#000" stroke-width="1.3" fill="none"/><path d="M14 12.3 H7.8 M10 10.1 L7.5 12.3 L10 14.5" stroke="#000" stroke-width="1.3" fill="none"/><rect x="15" y="1" width="1.2" height="15.5" fill="#000"/></svg>
<svg style="position:absolute;left:28px;top:670px" width="17" height="17" viewBox="0 0 17 17"><defs><linearGradient id="chg" x1="0" y1="0" x2="1" y2="0"><stop offset="0" stop-color="#d09a5c"/><stop offset="1" stop-color="#b88448"/></linearGradient></defs><rect x="0" y="5.5" width="6" height="7.5" fill="url(#chg)"/><path d="M7 5.5 H13.2 M11 3.3 L13.5 5.5 L11 7.7" stroke="#000" stroke-width="1.3" fill="none"/><path d="M14 12.3 H7.8 M10 10.1 L7.5 12.3 L10 14.5" stroke="#000" stroke-width="1.3" fill="none"/><rect x="15" y="1" width="1.2" height="15.5" fill="#000"/></svg>
<svg style="position:absolute;left:28px;top:694px" width="17" height="17" viewBox="0 0 17 17"><defs><linearGradient id="chg" x1="0" y1="0" x2="1" y2="0"><stop offset="0" stop-color="#d09a5c"/><stop offset="1" stop-color="#b88448"/></linearGradient></defs><rect x="0" y="5.5" width="6" height="7.5" fill="url(#chg)"/><path d="M7 5.5 H13.2 M11 3.3 L13.5 5.5 L11 7.7" stroke="#000" stroke-width="1.3" fill="none"/><path d="M14 12.3 H7.8 M10 10.1 L7.5 12.3 L10 14.5" stroke="#000" stroke-width="1.3" fill="none"/><rect x="15" y="1" width="1.2" height="15.5" fill="#000"/></svg>
<svg style="position:absolute;left:907px;top:171px" width="6" height="9" viewBox="0 0 6 9"><path d="M0.5 0.5 L5 4 L0.5 7.5 Z" fill="none" stroke="#c6c6c6" stroke-width="1"/></svg>
<svg style="position:absolute;left:922px;top:168px" width="16" height="15" viewBox="0 0 16 15"><path d="M1 14 V1.5 Q1 0.5 2 0.5 H6.5 L8 2 H13.5 Q14.5 2 14.5 3 V5 H3 Z" fill="#7d7d7d"/><path d="M3.2 5 H15.5 L14.5 13.7 H1.5 Z" fill="#e8b35c"/></svg>
<svg style="position:absolute;left:907px;top:196px" width="7" height="7" viewBox="0 0 7 7"><path d="M6 0 V6 H0 Z" fill="#404040"/></svg>
<svg style="position:absolute;left:922px;top:192px" width="14" height="14" viewBox="0 0 14 14"><rect x="0" y="0" width="14" height="14" fill="#c4cccc"/><rect x="0.7" y="0.7" width="12.6" height="12.6" fill="#cde4e4"/><rect x="6" y="4" width="2" height="6" fill="#c2d4d4"/><rect x="4" y="6" width="6" height="2" fill="#c2d4d4"/><rect x="6" y="2" width="2" height="1.1" fill="#0000ff"/><rect x="6" y="10.9" width="2" height="1.1" fill="#0000ff"/><rect x="2" y="6" width="1.1" height="2" fill="#0000ff"/><rect x="10.9" y="6" width="1.1" height="2" fill="#0000ff"/><rect x="1.6" y="1.6" width="3.8" height="3.8" fill="#fff" stroke="#0000ff" stroke-width="1.25"/><rect x="1.6" y="8.6" width="3.8" height="3.8" fill="#fff" stroke="#0000ff" stroke-width="1.25"/><rect x="8.6" y="1.6" width="3.8" height="3.8" fill="#fff" stroke="#0000ff" stroke-width="1.25"/><rect x="8.6" y="8.6" width="3.8" height="3.8" fill="#fff" stroke="#0000ff" stroke-width="1.25"/></svg>
<svg style="position:absolute;left:914px;top:220px" width="7" height="7" viewBox="0 0 7 7"><path d="M6 0 V6 H0 Z" fill="#404040"/></svg>
<svg style="position:absolute;left:928px;top:216px" width="14" height="14" viewBox="0 0 14 14"><rect x="0" y="0" width="14" height="14" fill="#c4cccc"/><rect x="0.7" y="0.7" width="12.6" height="12.6" fill="#cde4e4"/><rect x="6" y="4" width="2" height="6" fill="#c2d4d4"/><rect x="4" y="6" width="6" height="2" fill="#c2d4d4"/><rect x="6" y="2" width="2" height="1.1" fill="#008000"/><rect x="6" y="10.9" width="2" height="1.1" fill="#008000"/><rect x="2" y="6" width="1.1" height="2" fill="#008000"/><rect x="10.9" y="6" width="1.1" height="2" fill="#008000"/><rect x="1.6" y="1.6" width="3.8" height="3.8" fill="#fff" stroke="#008000" stroke-width="1.25"/><rect x="1.6" y="8.6" width="3.8" height="3.8" fill="#fff" stroke="#008000" stroke-width="1.25"/><rect x="8.6" y="1.6" width="3.8" height="3.8" fill="#fff" stroke="#008000" stroke-width="1.25"/><rect x="8.6" y="8.6" width="3.8" height="3.8" fill="#fff" stroke="#008000" stroke-width="1.25"/></svg>
<svg style="position:absolute;left:936px;top:240px" width="14" height="14" viewBox="0 0 14 14"><rect x="0" y="0" width="14" height="14" fill="#c4cccc"/><rect x="0.7" y="0.7" width="12.6" height="12.6" fill="#cde4e4"/><rect x="6" y="4" width="2" height="6" fill="#c2d4d4"/><rect x="4" y="6" width="6" height="2" fill="#c2d4d4"/><rect x="6" y="2" width="2" height="1.1" fill="#ff0000"/><rect x="6" y="10.9" width="2" height="1.1" fill="#ff0000"/><rect x="2" y="6" width="1.1" height="2" fill="#ff0000"/><rect x="10.9" y="6" width="1.1" height="2" fill="#ff0000"/><rect x="1.6" y="1.6" width="3.8" height="3.8" fill="#fff" stroke="#ff0000" stroke-width="1.25"/><rect x="1.6" y="8.6" width="3.8" height="3.8" fill="#fff" stroke="#ff0000" stroke-width="1.25"/><rect x="8.6" y="1.6" width="3.8" height="3.8" fill="#fff" stroke="#ff0000" stroke-width="1.25"/><rect x="8.6" y="8.6" width="3.8" height="3.8" fill="#fff" stroke="#ff0000" stroke-width="1.25"/></svg>
<svg style="position:absolute;left:936px;top:264px" width="14" height="14" viewBox="0 0 14 14"><rect x="0" y="0" width="14" height="14" fill="#c4cccc"/><rect x="0.7" y="0.7" width="12.6" height="12.6" fill="#cde4e4"/><rect x="6" y="4" width="2" height="6" fill="#c2d4d4"/><rect x="4" y="6" width="6" height="2" fill="#c2d4d4"/><rect x="6" y="2" width="2" height="1.1" fill="#ff0000"/><rect x="6" y="10.9" width="2" height="1.1" fill="#ff0000"/><rect x="2" y="6" width="1.1" height="2" fill="#ff0000"/><rect x="10.9" y="6" width="1.1" height="2" fill="#ff0000"/><rect x="1.6" y="1.6" width="3.8" height="3.8" fill="#fff" stroke="#ff0000" stroke-width="1.25"/><rect x="1.6" y="8.6" width="3.8" height="3.8" fill="#fff" stroke="#ff0000" stroke-width="1.25"/><rect x="8.6" y="1.6" width="3.8" height="3.8" fill="#fff" stroke="#ff0000" stroke-width="1.25"/><rect x="8.6" y="8.6" width="3.8" height="3.8" fill="#fff" stroke="#ff0000" stroke-width="1.25"/></svg>
<svg style="position:absolute;left:936px;top:288px" width="14" height="14" viewBox="0 0 14 14"><rect x="0" y="0" width="14" height="14" fill="#c4cccc"/><rect x="0.7" y="0.7" width="12.6" height="12.6" fill="#cde4e4"/><rect x="6" y="4" width="2" height="6" fill="#c2d4d4"/><rect x="4" y="6" width="6" height="2" fill="#c2d4d4"/><rect x="6" y="2" width="2" height="1.1" fill="#ff0000"/><rect x="6" y="10.9" width="2" height="1.1" fill="#ff0000"/><rect x="2" y="6" width="1.1" height="2" fill="#ff0000"/><rect x="10.9" y="6" width="1.1" height="2" fill="#ff0000"/><rect x="1.6" y="1.6" width="3.8" height="3.8" fill="#fff" stroke="#ff0000" stroke-width="1.25"/><rect x="1.6" y="8.6" width="3.8" height="3.8" fill="#fff" stroke="#ff0000" stroke-width="1.25"/><rect x="8.6" y="1.6" width="3.8" height="3.8" fill="#fff" stroke="#ff0000" stroke-width="1.25"/><rect x="8.6" y="8.6" width="3.8" height="3.8" fill="#fff" stroke="#ff0000" stroke-width="1.25"/></svg>
<svg style="position:absolute;left:936px;top:312px" width="14" height="14" viewBox="0 0 14 14"><rect x="0" y="0" width="14" height="14" fill="#c4cccc"/><rect x="0.7" y="0.7" width="12.6" height="12.6" fill="#cde4e4"/><rect x="6" y="4" width="2" height="6" fill="#c2d4d4"/><rect x="4" y="6" width="6" height="2" fill="#c2d4d4"/><rect x="6" y="2" width="2" height="1.1" fill="#ff0000"/><rect x="6" y="10.9" width="2" height="1.1" fill="#ff0000"/><rect x="2" y="6" width="1.1" height="2" fill="#ff0000"/><rect x="10.9" y="6" width="1.1" height="2" fill="#ff0000"/><rect x="1.6" y="1.6" width="3.8" height="3.8" fill="#fff" stroke="#ff0000" stroke-width="1.25"/><rect x="1.6" y="8.6" width="3.8" height="3.8" fill="#fff" stroke="#ff0000" stroke-width="1.25"/><rect x="8.6" y="1.6" width="3.8" height="3.8" fill="#fff" stroke="#ff0000" stroke-width="1.25"/><rect x="8.6" y="8.6" width="3.8" height="3.8" fill="#fff" stroke="#ff0000" stroke-width="1.25"/></svg>
<svg style="position:absolute;left:936px;top:336px" width="14" height="14" viewBox="0 0 14 14"><rect x="0" y="0" width="14" height="14" fill="#c4cccc"/><rect x="0.7" y="0.7" width="12.6" height="12.6" fill="#cde4e4"/><rect x="6" y="4" width="2" height="6" fill="#c2d4d4"/><rect x="4" y="6" width="6" height="2" fill="#c2d4d4"/><rect x="6" y="2" width="2" height="1.1" fill="#ff0000"/><rect x="6" y="10.9" width="2" height="1.1" fill="#ff0000"/><rect x="2" y="6" width="1.1" height="2" fill="#ff0000"/><rect x="10.9" y="6" width="1.1" height="2" fill="#ff0000"/><rect x="1.6" y="1.6" width="3.8" height="3.8" fill="#fff" stroke="#ff0000" stroke-width="1.25"/><rect x="1.6" y="8.6" width="3.8" height="3.8" fill="#fff" stroke="#ff0000" stroke-width="1.25"/><rect x="8.6" y="1.6" width="3.8" height="3.8" fill="#fff" stroke="#ff0000" stroke-width="1.25"/><rect x="8.6" y="8.6" width="3.8" height="3.8" fill="#fff" stroke="#ff0000" stroke-width="1.25"/></svg>
<svg style="position:absolute;left:936px;top:360px" width="14" height="14" viewBox="0 0 14 14"><rect x="0" y="0" width="14" height="14" fill="#c4cccc"/><rect x="0.7" y="0.7" width="12.6" height="12.6" fill="#cde4e4"/><rect x="6" y="4" width="2" height="6" fill="#c2d4d4"/><rect x="4" y="6" width="6" height="2" fill="#c2d4d4"/><rect x="6" y="2" width="2" height="1.1" fill="#ff0000"/><rect x="6" y="10.9" width="2" height="1.1" fill="#ff0000"/><rect x="2" y="6" width="1.1" height="2" fill="#ff0000"/><rect x="10.9" y="6" width="1.1" height="2" fill="#ff0000"/><rect x="1.6" y="1.6" width="3.8" height="3.8" fill="#fff" stroke="#ff0000" stroke-width="1.25"/><rect x="1.6" y="8.6" width="3.8" height="3.8" fill="#fff" stroke="#ff0000" stroke-width="1.25"/><rect x="8.6" y="1.6" width="3.8" height="3.8" fill="#fff" stroke="#ff0000" stroke-width="1.25"/><rect x="8.6" y="8.6" width="3.8" height="3.8" fill="#fff" stroke="#ff0000" stroke-width="1.25"/></svg>
<svg style="position:absolute;left:936px;top:384px" width="14" height="14" viewBox="0 0 14 14"><rect x="0" y="0" width="14" height="14" fill="#c4cccc"/><rect x="0.7" y="0.7" width="12.6" height="12.6" fill="#cde4e4"/><rect x="6" y="4" width="2" height="6" fill="#c2d4d4"/><rect x="4" y="6" width="6" height="2" fill="#c2d4d4"/><rect x="6" y="2" width="2" height="1.1" fill="#ff0000"/><rect x="6" y="10.9" width="2" height="1.1" fill="#ff0000"/><rect x="2" y="6" width="1.1" height="2" fill="#ff0000"/><rect x="10.9" y="6" width="1.1" height="2" fill="#ff0000"/><rect x="1.6" y="1.6" width="3.8" height="3.8" fill="#fff" stroke="#ff0000" stroke-width="1.25"/><rect x="1.6" y="8.6" width="3.8" height="3.8" fill="#fff" stroke="#ff0000" stroke-width="1.25"/><rect x="8.6" y="1.6" width="3.8" height="3.8" fill="#fff" stroke="#ff0000" stroke-width="1.25"/><rect x="8.6" y="8.6" width="3.8" height="3.8" fill="#fff" stroke="#ff0000" stroke-width="1.25"/></svg>
<svg style="position:absolute;left:936px;top:408px" width="14" height="14" viewBox="0 0 14 14"><rect x="0" y="0" width="14" height="14" fill="#c4cccc"/><rect x="0.7" y="0.7" width="12.6" height="12.6" fill="#cde4e4"/><rect x="6" y="4" width="2" height="6" fill="#c2d4d4"/><rect x="4" y="6" width="6" height="2" fill="#c2d4d4"/><rect x="6" y="2" width="2" height="1.1" fill="#ff0000"/><rect x="6" y="10.9" width="2" height="1.1" fill="#ff0000"/><rect x="2" y="6" width="1.1" height="2" fill="#ff0000"/><rect x="10.9" y="6" width="1.1" height="2" fill="#ff0000"/><rect x="1.6" y="1.6" width="3.8" height="3.8" fill="#fff" stroke="#ff0000" stroke-width="1.25"/><rect x="1.6" y="8.6" width="3.8" height="3.8" fill="#fff" stroke="#ff0000" stroke-width="1.25"/><rect x="8.6" y="1.6" width="3.8" height="3.8" fill="#fff" stroke="#ff0000" stroke-width="1.25"/><rect x="8.6" y="8.6" width="3.8" height="3.8" fill="#fff" stroke="#ff0000" stroke-width="1.25"/></svg>
<svg style="position:absolute;left:936px;top:432px" width="14" height="14" viewBox="0 0 14 14"><rect x="0" y="0" width="14" height="14" fill="#c4cccc"/><rect x="0.7" y="0.7" width="12.6" height="12.6" fill="#cde4e4"/><rect x="6" y="4" width="2" height="6" fill="#c2d4d4"/><rect x="4" y="6" width="6" height="2" fill="#c2d4d4"/><rect x="6" y="2" width="2" height="1.1" fill="#ff0000"/><rect x="6" y="10.9" width="2" height="1.1" fill="#ff0000"/><rect x="2" y="6" width="1.1" height="2" fill="#ff0000"/><rect x="10.9" y="6" width="1.1" height="2" fill="#ff0000"/><rect x="1.6" y="1.6" width="3.8" height="3.8" fill="#fff" stroke="#ff0000" stroke-width="1.25"/><rect x="1.6" y="8.6" width="3.8" height="3.8" fill="#fff" stroke="#ff0000" stroke-width="1.25"/><rect x="8.6" y="1.6" width="3.8" height="3.8" fill="#fff" stroke="#ff0000" stroke-width="1.25"/><rect x="8.6" y="8.6" width="3.8" height="3.8" fill="#fff" stroke="#ff0000" stroke-width="1.25"/></svg>
<svg style="position:absolute;left:936px;top:456px" width="14" height="14" viewBox="0 0 14 14"><rect x="0" y="0" width="14" height="14" fill="#c4cccc"/><rect x="0.7" y="0.7" width="12.6" height="12.6" fill="#cde4e4"/><rect x="6" y="4" width="2" height="6" fill="#c2d4d4"/><rect x="4" y="6" width="6" height="2" fill="#c2d4d4"/><rect x="6" y="2" width="2" height="1.1" fill="#ff0000"/><rect x="6" y="10.9" width="2" height="1.1" fill="#ff0000"/><rect x="2" y="6" width="1.1" height="2" fill="#ff0000"/><rect x="10.9" y="6" width="1.1" height="2" fill="#ff0000"/><rect x="1.6" y="1.6" width="3.8" height="3.8" fill="#fff" stroke="#ff0000" stroke-width="1.25"/><rect x="1.6" y="8.6" width="3.8" height="3.8" fill="#fff" stroke="#ff0000" stroke-width="1.25"/><rect x="8.6" y="1.6" width="3.8" height="3.8" fill="#fff" stroke="#ff0000" stroke-width="1.25"/><rect x="8.6" y="8.6" width="3.8" height="3.8" fill="#fff" stroke="#ff0000" stroke-width="1.25"/></svg>
<svg style="position:absolute;left:936px;top:480px" width="14" height="14" viewBox="0 0 14 14"><rect x="0" y="0" width="14" height="14" fill="#c4cccc"/><rect x="0.7" y="0.7" width="12.6" height="12.6" fill="#cde4e4"/><rect x="6" y="4" width="2" height="6" fill="#c2d4d4"/><rect x="4" y="6" width="6" height="2" fill="#c2d4d4"/><rect x="6" y="2" width="2" height="1.1" fill="#ff0000"/><rect x="6" y="10.9" width="2" height="1.1" fill="#ff0000"/><rect x="2" y="6" width="1.1" height="2" fill="#ff0000"/><rect x="10.9" y="6" width="1.1" height="2" fill="#ff0000"/><rect x="1.6" y="1.6" width="3.8" height="3.8" fill="#fff" stroke="#ff0000" stroke-width="1.25"/><rect x="1.6" y="8.6" width="3.8" height="3.8" fill="#fff" stroke="#ff0000" stroke-width="1.25"/><rect x="8.6" y="1.6" width="3.8" height="3.8" fill="#fff" stroke="#ff0000" stroke-width="1.25"/><rect x="8.6" y="8.6" width="3.8" height="3.8" fill="#fff" stroke="#ff0000" stroke-width="1.25"/></svg>
<svg style="position:absolute;left:936px;top:504px" width="14" height="14" viewBox="0 0 14 14"><rect x="0" y="0" width="14" height="14" fill="#c4cccc"/><rect x="0.7" y="0.7" width="12.6" height="12.6" fill="#cde4e4"/><rect x="6" y="4" width="2" height="6" fill="#c2d4d4"/><rect x="4" y="6" width="6" height="2" fill="#c2d4d4"/><rect x="6" y="2" width="2" height="1.1" fill="#ff0000"/><rect x="6" y="10.9" width="2" height="1.1" fill="#ff0000"/><rect x="2" y="6" width="1.1" height="2" fill="#ff0000"/><rect x="10.9" y="6" width="1.1" height="2" fill="#ff0000"/><rect x="1.6" y="1.6" width="3.8" height="3.8" fill="#fff" stroke="#ff0000" stroke-width="1.25"/><rect x="1.6" y="8.6" width="3.8" height="3.8" fill="#fff" stroke="#ff0000" stroke-width="1.25"/><rect x="8.6" y="1.6" width="3.8" height="3.8" fill="#fff" stroke="#ff0000" stroke-width="1.25"/><rect x="8.6" y="8.6" width="3.8" height="3.8" fill="#fff" stroke="#ff0000" stroke-width="1.25"/></svg>
<svg style="position:absolute;left:936px;top:528px" width="14" height="14" viewBox="0 0 14 14"><rect x="0" y="0" width="14" height="14" fill="#c4cccc"/><rect x="0.7" y="0.7" width="12.6" height="12.6" fill="#cde4e4"/><rect x="6" y="4" width="2" height="6" fill="#c2d4d4"/><rect x="4" y="6" width="6" height="2" fill="#c2d4d4"/><rect x="6" y="2" width="2" height="1.1" fill="#ff0000"/><rect x="6" y="10.9" width="2" height="1.1" fill="#ff0000"/><rect x="2" y="6" width="1.1" height="2" fill="#ff0000"/><rect x="10.9" y="6" width="1.1" height="2" fill="#ff0000"/><rect x="1.6" y="1.6" width="3.8" height="3.8" fill="#fff" stroke="#ff0000" stroke-width="1.25"/><rect x="1.6" y="8.6" width="3.8" height="3.8" fill="#fff" stroke="#ff0000" stroke-width="1.25"/><rect x="8.6" y="1.6" width="3.8" height="3.8" fill="#fff" stroke="#ff0000" stroke-width="1.25"/><rect x="8.6" y="8.6" width="3.8" height="3.8" fill="#fff" stroke="#ff0000" stroke-width="1.25"/></svg>
<svg style="position:absolute;left:936px;top:552px" width="14" height="14" viewBox="0 0 14 14"><rect x="0" y="0" width="14" height="14" fill="#c4cccc"/><rect x="0.7" y="0.7" width="12.6" height="12.6" fill="#cde4e4"/><rect x="6" y="4" width="2" height="6" fill="#c2d4d4"/><rect x="4" y="6" width="6" height="2" fill="#c2d4d4"/><rect x="6" y="2" width="2" height="1.1" fill="#ff0000"/><rect x="6" y="10.9" width="2" height="1.1" fill="#ff0000"/><rect x="2" y="6" width="1.1" height="2" fill="#ff0000"/><rect x="10.9" y="6" width="1.1" height="2" fill="#ff0000"/><rect x="1.6" y="1.6" width="3.8" height="3.8" fill="#fff" stroke="#ff0000" stroke-width="1.25"/><rect x="1.6" y="8.6" width="3.8" height="3.8" fill="#fff" stroke="#ff0000" stroke-width="1.25"/><rect x="8.6" y="1.6" width="3.8" height="3.8" fill="#fff" stroke="#ff0000" stroke-width="1.25"/><rect x="8.6" y="8.6" width="3.8" height="3.8" fill="#fff" stroke="#ff0000" stroke-width="1.25"/></svg>
<div style="position:absolute;left:900px;top:571px;width:263px;height:24px;background:#e5e5e5;"></div>
<svg style="position:absolute;left:936px;top:576px" width="14" height="14" viewBox="0 0 14 14"><rect x="0" y="0" width="14" height="14" fill="#c4cccc"/><rect x="0.7" y="0.7" width="12.6" height="12.6" fill="#cde4e4"/><rect x="6" y="4" width="2" height="6" fill="#c2d4d4"/><rect x="4" y="6" width="6" height="2" fill="#c2d4d4"/><rect x="6" y="2" width="2" height="1.1" fill="#ff0000"/><rect x="6" y="10.9" width="2" height="1.1" fill="#ff0000"/><rect x="2" y="6" width="1.1" height="2" fill="#ff0000"/><rect x="10.9" y="6" width="1.1" height="2" fill="#ff0000"/><rect x="1.6" y="1.6" width="3.8" height="3.8" fill="#fff" stroke="#ff0000" stroke-width="1.25"/><rect x="1.6" y="8.6" width="3.8" height="3.8" fill="#fff" stroke="#ff0000" stroke-width="1.25"/><rect x="8.6" y="1.6" width="3.8" height="3.8" fill="#fff" stroke="#ff0000" stroke-width="1.25"/><rect x="8.6" y="8.6" width="3.8" height="3.8" fill="#fff" stroke="#ff0000" stroke-width="1.25"/></svg>
<svg style="position:absolute;left:907px;top:603px" width="6" height="9" viewBox="0 0 6 9"><path d="M0.5 0.5 L5 4 L0.5 7.5 Z" fill="none" stroke="#c6c6c6" stroke-width="1"/></svg>
<svg style="position:absolute;left:922px;top:600px" width="14" height="14" viewBox="0 0 14 14"><rect x="0" y="0" width="14" height="14" fill="#c4cccc"/><rect x="0.7" y="0.7" width="12.6" height="12.6" fill="#cde4e4"/><rect x="6" y="4" width="2" height="6" fill="#c2d4d4"/><rect x="4" y="6" width="6" height="2" fill="#c2d4d4"/><rect x="6" y="2" width="2" height="1.1" fill="#0000ff"/><rect x="6" y="10.9" width="2" height="1.1" fill="#0000ff"/><rect x="2" y="6" width="1.1" height="2" fill="#0000ff"/><rect x="10.9" y="6" width="1.1" height="2" fill="#0000ff"/><rect x="1.6" y="1.6" width="3.8" height="3.8" fill="#fff" stroke="#0000ff" stroke-width="1.25"/><rect x="1.6" y="8.6" width="3.8" height="3.8" fill="#fff" stroke="#0000ff" stroke-width="1.25"/><rect x="8.6" y="1.6" width="3.8" height="3.8" fill="#fff" stroke="#0000ff" stroke-width="1.25"/><rect x="8.6" y="8.6" width="3.8" height="3.8" fill="#fff" stroke="#0000ff" stroke-width="1.25"/></svg>
<div class="t" style="left:23.00px;top:4.84px;color:#000;letter-spacing:0.000px;transform:scaleX(0.8965);transform-origin:0 0;">ETS5™ - Kalkestraat 25</div>
<div class="t" style="left:20.80px;top:28.84px;font-size:12.5px;color:#fff;letter-spacing:0.000px;transform:scaleX(0.7527);transform-origin:0 0;font-weight:bold;">ETS</div>
<div class="t" style="left:66.60px;top:27.84px;color:#333;letter-spacing:-0.372px;">Bewerken</div>
<div class="t" style="left:129.00px;top:27.84px;color:#333;letter-spacing:-0.161px;">Werkplaats</div>
<div class="t" style="left:199.50px;top:27.84px;color:#333;letter-spacing:0.056px;">Inbedrijfstelling</div>
<div class="t" style="left:293.60px;top:27.84px;color:#333;letter-spacing:-0.238px;">Diagnose</div>
<div class="t" style="left:355.00px;top:27.84px;color:#333;letter-spacing:-0.190px;">Apps</div>
<div class="t" style="left:394.00px;top:27.84px;color:#333;letter-spacing:-0.186px;">Venster</div>
<div class="t" style="left:38.00px;top:57.34px;color:#333;letter-spacing:-0.079px;">Sluit Project</div>
<div class="t" style="left:149.50px;top:57.34px;color:#9e9e9e;letter-spacing:-0.121px;">Maak ongedaan</div>
<div class="t" style="left:278.00px;top:57.34px;color:#9e9e9e;letter-spacing:-0.054px;">Opnieuw</div>
<div class="t" style="left:374.00px;top:57.34px;color:#333;letter-spacing:-0.116px;">Rapporten</div>
<div class="t" style="left:478.00px;top:57.34px;color:#333;letter-spacing:0.016px;">Werkomgeving</div>
<div class="t" style="left:613.00px;top:57.34px;color:#333;letter-spacing:-0.054px;">Catalogi</div>
<div class="t" style="left:705.00px;top:57.34px;color:#333;letter-spacing:-0.213px;">Diagnose</div>
<div class="t" style="left:12.40px;top:87.34px;color:#000;letter-spacing:-0.313px;font-weight:bold;">Busdeelnemers</div>
<div class="t" style="left:911.00px;top:87.34px;color:#fff;letter-spacing:-0.311px;font-weight:bold;">Groepadressen</div>
<div class="t" style="left:29.00px;top:115.84px;color:#9e9e9e;letter-spacing:-0.346px;">Kanalen Toevoegen</div>
<div class="t" style="left:183.00px;top:115.84px;color:#9e9e9e;letter-spacing:-0.246px;">Verwijderen</div>
<div class="t" style="left:277.00px;top:115.84px;color:#333;letter-spacing:-0.196px;">Inladen</div>
<div class="t" style="left:367.00px;top:115.84px;color:#333;letter-spacing:-0.004px;">Info</div>
<div class="t" style="left:432.00px;top:115.84px;color:#333;letter-spacing:0.000px;transform:scaleX(0.8610);transform-origin:0 0;">Reset</div>
<div class="t" style="left:493.00px;top:115.84px;color:#333;letter-spacing:-0.172px;">Unload</div>
<div class="t" style="left:575.00px;top:115.84px;color:#333;letter-spacing:-0.141px;">Druk af</div>
<div class="t" style="left:928.00px;top:115.84px;color:#9e9e9e;letter-spacing:-0.293px;">Voeg Groepadressen toe</div>
<div class="t" style="left:1109.00px;top:115.84px;color:#333;letter-spacing:-0.246px;">Verwijderen</div>
<div class="t" style="left:1203.00px;top:115.84px;color:#333;letter-spacing:-0.196px;">Inladen</div>
<div class="t" style="left:1293.00px;top:115.84px;color:#333;letter-spacing:-0.004px;">Info</div>
<div class="t" style="left:1358.00px;top:115.84px;color:#333;letter-spacing:0.000px;transform:scaleX(0.8610);transform-origin:0 0;">Reset</div>
<div class="t" style="left:1419.00px;top:115.84px;color:#333;letter-spacing:-0.172px;">Unload</div>
<div class="t" style="left:1501.00px;top:115.84px;color:#333;letter-spacing:-0.141px;">Druk af</div>
<div class="t" style="left:694.00px;top:115.84px;color:#a8a8a8;letter-spacing:-0.172px;">Zoek</div>
<div class="t" style="left:1681.00px;top:115.84px;color:#a8a8a8;letter-spacing:-0.110px;">Z</div>
<div class="t" style="left:28.00px;top:144.84px;color:#333;letter-spacing:0.000px;transform:scaleX(0.9175);transform-origin:0 0;font-weight:bold;">Busdeelnemers</div>
<div class="t" style="left:927.00px;top:144.84px;color:#333;letter-spacing:0.000px;transform:scaleX(0.9166);transform-origin:0 0;font-weight:bold;">Groepadressen</div>
<div class="t" style="left:311.00px;top:144.84px;color:#000;letter-spacing:0.000px;transform:scaleX(0.9204);transform-origin:0 0;font-weight:bold;">Groepadres</div>
<div class="t" style="left:484.00px;top:144.84px;color:#000;letter-spacing:0.000px;transform:scaleX(0.8954);transform-origin:0 0;font-weight:bold;">Beschrijving</div>
<div class="t" style="left:584.30px;top:144.84px;color:#000;letter-spacing:-0.308px;font-weight:bold;">Data Type</div>
<div class="t" style="left:685.00px;top:144.84px;color:#000;letter-spacing:-0.315px;font-weight:bold;">Verzenden</div>
<div class="t" style="left:761.00px;top:144.84px;color:#000;letter-spacing:0.000px;transform:scaleX(0.9369);transform-origin:0 0;font-weight:bold;">Centraal</div>
<div class="t" style="left:1191.00px;top:144.84px;color:#000;letter-spacing:-0.357px;font-weight:bold;">Object</div>
<div class="t" style="left:1381.30px;top:144.84px;color:#000;letter-spacing:0.000px;transform:scaleX(0.9262);transform-origin:0 0;font-weight:bold;">Busdeelnemer</div>
<div class="t" style="left:1546.00px;top:144.84px;color:#000;letter-spacing:-0.303px;font-weight:bold;">Verzenden</div>
<div class="t" style="left:1615.50px;top:144.84px;color:#000;letter-spacing:-0.308px;font-weight:bold;">Data Type</div>
<div class="t" style="left:1679.80px;top:144.84px;color:#000;letter-spacing:-0.130px;font-weight:bold;">C</div>
<div class="t" style="left:306.00px;top:167.14px;color:#222222;letter-spacing:0.000px;transform:scaleX(0.9308);transform-origin:0 0;">0/0/15 LampKleineKamerStaircase</div>
<div class="t" style="left:579.20px;top:167.14px;color:#222222;letter-spacing:0.000px;transform:scaleX(0.9297);transform-origin:0 0;">switch</div>
<div class="t" style="left:680.00px;top:167.14px;color:#222222;letter-spacing:0.000px;transform:scaleX(0.7735);transform-origin:0 0;">S</div>
<div class="t" style="left:756.00px;top:167.14px;color:#222222;letter-spacing:0.000px;transform:scaleX(0.9367);transform-origin:0 0;">Geen</div>
<div class="t" style="left:1186.60px;top:167.14px;color:#222222;letter-spacing:-0.234px;">56: Output E - Staircase light</div>
<div class="t" style="left:1376.50px;top:167.14px;color:#222222;letter-spacing:0.000px;transform:scaleX(0.8204);transform-origin:0 0;">1.1.51 M/R16.16.1</div>
<div class="t" style="left:1541.20px;top:167.14px;color:#222222;letter-spacing:0.000px;transform:scaleX(0.7485);transform-origin:0 0;">S</div>
<div class="t" style="left:1610.00px;top:167.14px;color:#222222;letter-spacing:0.000px;transform:scaleX(0.9297);transform-origin:0 0;">switch</div>
<div class="t" style="left:1675.20px;top:167.14px;color:#222222;letter-spacing:0.000px;transform:scaleX(0.8072);transform-origin:0 0;">C</div>
<div class="t" style="left:43.70px;top:168.84px;color:#222222;letter-spacing:-0.084px;">Dynamische Mappen</div>
<div class="t" style="left:43.70px;top:192.84px;color:#222222;letter-spacing:-0.308px;">1.1.1 badkamer M/TBP2.1</div>
<div class="t" style="left:43.70px;top:216.84px;color:#222222;letter-spacing:-0.194px;">1.1.2 Gang boven 2 knoppen M/TBP2.1</div>
<div class="t" style="left:43.70px;top:240.84px;color:#222222;letter-spacing:-0.317px;">1.1.3 Kleine kamer M/TBP1.1</div>
<div class="t" style="left:43.70px;top:264.84px;color:#222222;letter-spacing:-0.221px;">1.1.4 grote kamer M/TBP2.1</div>
<div class="t" style="left:43.70px;top:288.84px;color:#222222;letter-spacing:0.000px;transform:scaleX(0.9258);transform-origin:0 0;">1.1.5 Trap M/TBP1.1</div>
<div class="t" style="left:43.70px;top:312.84px;color:#222222;letter-spacing:-0.301px;">1.1.7 adres ok PD9-KNX-IB</div>
<div class="t" style="left:43.70px;top:336.84px;color:#222222;letter-spacing:-0.222px;">1.1.8 Achterdeur M/TBP4.1</div>
<div class="t" style="left:43.70px;top:360.84px;color:#222222;letter-spacing:-0.332px;">1.1.9 Kamer Phil</div>
<div class="t" style="left:43.70px;top:384.84px;color:#222222;letter-spacing:-0.266px;">1.1.17 Woonkamer M/TBP4.1</div>
<div class="t" style="left:43.70px;top:408.84px;color:#222222;letter-spacing:-0.110px;">1.1.18 Universal interface 2-fold</div>
<div class="t" style="left:43.70px;top:432.84px;color:#222222;letter-spacing:-0.363px;">1.1.19 M/TBP4.1 Keuken</div>
<div class="t" style="left:43.70px;top:456.84px;color:#222222;letter-spacing:0.000px;transform:scaleX(0.9178);transform-origin:0 0;">1.1.50 KNX IP BAOS 777</div>
<div class="t" style="left:43.70px;top:480.84px;color:#222222;letter-spacing:0.000px;transform:scaleX(0.9379);transform-origin:0 0;">1.1.51 M/R16.16.1</div>
<div class="t" style="left:49.50px;top:504.84px;color:#222222;letter-spacing:0.085px;">10: Output A - Channel output</div>
<div class="t" style="left:49.50px;top:528.84px;color:#222222;letter-spacing:0.019px;">20: Output B - Channel output</div>
<div class="t" style="left:49.50px;top:552.84px;color:#222222;letter-spacing:-0.158px;">21: Output B - Response status after chan...</div>
<div class="t" style="left:49.50px;top:576.84px;color:#222222;letter-spacing:0.017px;">30: Output C - Channel output</div>
<div class="t" style="left:49.50px;top:600.84px;color:#222222;letter-spacing:0.045px;">40: Output D - Channel output</div>
<div class="t" style="left:49.50px;top:624.84px;color:#222222;letter-spacing:-0.002px;">50: Output E - Channel output</div>
<div class="t" style="left:49.50px;top:648.84px;color:#222222;letter-spacing:-0.111px;">56: Output E - Staircase light</div>
<div class="t" style="left:49.50px;top:672.84px;color:#222222;letter-spacing:0.022px;">60: Output F - Channel output</div>
<div class="t" style="left:942.40px;top:168.84px;color:#222222;letter-spacing:-0.137px;">Dynamische Mappen</div>
<div class="t" style="left:942.40px;top:192.84px;color:#222222;letter-spacing:-0.060px;">0 Verlichting</div>
<div class="t" style="left:948.00px;top:216.84px;color:#222222;letter-spacing:-0.166px;">0/0 schakelen</div>
<div class="t" style="left:955.80px;top:240.84px;color:#222222;letter-spacing:0.043px;">0/0/1 lamp keuken 1</div>
<div class="t" style="left:955.80px;top:264.84px;color:#222222;letter-spacing:0.080px;">0/0/2 lamp keuken 2</div>
<div class="t" style="left:955.80px;top:288.84px;color:#222222;letter-spacing:0.127px;">0/0/3 Woonkamer</div>
<div class="t" style="left:955.80px;top:312.84px;color:#222222;letter-spacing:0.104px;">0/0/4 LampInkomhal</div>
<div class="t" style="left:955.80px;top:336.84px;color:#222222;letter-spacing:-0.100px;">0/0/5 LampTrapBoven</div>
<div class="t" style="left:955.80px;top:360.84px;color:#222222;letter-spacing:-0.069px;">0/0/6 LampBadkamer1</div>
<div class="t" style="left:955.80px;top:384.84px;color:#222222;letter-spacing:-0.032px;">0/0/7 LampBadkamer2</div>
<div class="t" style="left:955.80px;top:408.84px;color:#222222;letter-spacing:-0.098px;">0/0/8 LampKleineKamer</div>
<div class="t" style="left:955.80px;top:432.84px;color:#222222;letter-spacing:-0.045px;">0/0/9 LampGroteKamer</div>
<div class="t" style="left:955.80px;top:456.84px;color:#222222;letter-spacing:-0.006px;">0/0/10 Lamp Berging</div>
<div class="t" style="left:955.80px;top:480.84px;color:#222222;letter-spacing:0.045px;">0/0/11 Lamp Buiten</div>
<div class="t" style="left:955.80px;top:504.84px;color:#222222;letter-spacing:-0.083px;">0/0/12 Lamp Kamer Lou</div>
<div class="t" style="left:955.80px;top:528.84px;color:#222222;letter-spacing:-0.080px;">0/0/13 Lamp Kamer Phil</div>
<div class="t" style="left:955.80px;top:552.84px;color:#222222;letter-spacing:0.061px;">0/0/14 Lamp gang Zolder</div>
<div class="t" style="left:955.80px;top:576.84px;color:#222222;letter-spacing:-0.188px;">0/0/15 LampKleineKamerStaircase</div>
<div class="t" style="left:942.40px;top:600.84px;color:#222222;letter-spacing:-0.130px;">1 Centrale functies</div>
</body></html>
